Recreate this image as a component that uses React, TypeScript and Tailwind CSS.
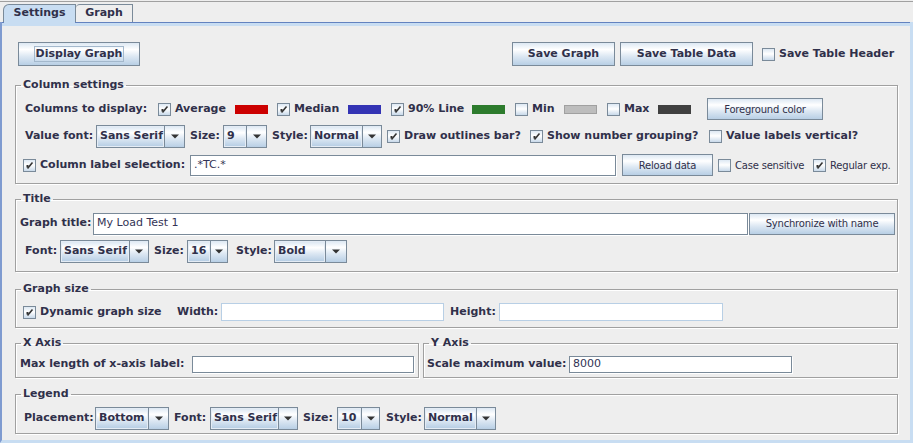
import type { ReactNode } from 'react';

const grad = 'bg-[linear-gradient(#dde8f3,#ffffff_30%,#dde8f3_60%,#b8cfe5)]';
const ink = 'text-[#30304a]';

function Label({ children, className = '' }: { children: ReactNode; className?: string }) {
    return (
        <span className={`flex shrink-0 items-center whitespace-nowrap text-[11px] font-bold ${ink} ${className}`}>
            {children}
        </span>
    );
}

function Btn({
    children,
    className = '',
    small = false,
    focus = false,
}: {
    children: ReactNode;
    className?: string;
    small?: boolean;
    focus?: boolean;
}) {
    return (
        <div
            className={`flex shrink-0 items-center justify-center border border-[#7a8a99] ${grad} ${ink} ${
                small ? 'text-[10px] tracking-[-0.2px]' : 'text-[11px] font-bold'
            } ${className}`}
        >
            {focus ? <span className="border border-[#a3b8cc] px-px leading-[14px]">{children}</span> : children}
        </div>
    );
}

function Check({ on = false }: { on?: boolean }) {
    return (
        <span className="flex h-[13px] w-[13px] shrink-0 items-center justify-center border border-[#7a8a99] bg-[linear-gradient(#dde8f3,#ffffff_45%,#c8d9ea)]">
            {on && (
                <svg width="9" height="9" viewBox="0 0 9 9">
                    <rect x="1.5" y="4" width="2" height="2.5" fill="#333" />
                    <path d="M2.5 7.5 L7.5 1.5" stroke="#333" strokeWidth="1.6" fill="none" />
                </svg>
            )}
        </span>
    );
}

function CheckLabel({
    children,
    on = false,
    small = false,
    className = '',
}: {
    children: ReactNode;
    on?: boolean;
    small?: boolean;
    className?: string;
}) {
    return (
        <span className={`flex shrink-0 items-center ${className}`}>
            <Check on={on} />
            <span
                className={`ml-[4px] whitespace-nowrap ${ink} ${
                    small ? 'text-[10px] tracking-[-0.2px]' : 'text-[11px] font-bold'
                }`}
            >
                {children}
            </span>
        </span>
    );
}

function Combo({ value, className, arrow }: { value: string; className: string; arrow: string }) {
    return (
        <div className={`flex h-[23px] shrink-0 border border-[#7a8a99] ${className}`}>
            <div
                className={`flex flex-1 items-center border border-[#e4ecf5] pl-[2px] text-[11px] font-bold whitespace-nowrap ${grad} ${ink}`}
            >
                {value}
            </div>
            <div className={`flex items-center justify-center border-l border-[#7a8a99] ${grad} ${arrow}`}>
                <svg width="8" height="5" viewBox="0 0 8 5">
                    <path d="M0 0.5 H8 L4 4.5 Z" fill="#333" />
                </svg>
            </div>
        </div>
    );
}

function Field({ value = '', className, disabled = false }: { value?: string; className: string; disabled?: boolean }) {
    return (
        <div
            className={`flex shrink-0 items-center bg-white pl-[3px] text-[11px] text-[#333355] whitespace-nowrap ${
                disabled ? 'border border-[#b8cfe5]' : 'border border-[#7a8a99] shadow-[1px_1px_0_#ffffff]'
            } ${className}`}
        >
            {value}
        </div>
    );
}

function Swatch({ box, color }: { box: string; color: string }) {
    return (
        <span className={`flex shrink-0 items-center ${box}`}>
            <span className={`h-[9px] w-[33px] ${color}`} />
        </span>
    );
}

function Group({ title, children, className = '' }: { title: string; children: ReactNode; className?: string }) {
    return (
        <fieldset
            className={`min-w-0 border border-[#a0a0a0] shadow-[inset_1px_1px_0_#ffffff,1px_1px_0_#ffffff] ${className}`}
        >
            <legend className={`ml-[5px] px-[2px] text-[11px] leading-[14px] font-bold ${ink}`}>{title}</legend>
            {children}
        </fieldset>
    );
}

export default function App() {
    return (
        <div className="h-[443px] w-[913px] overflow-hidden bg-[#eeeeee] pt-px font-['DejaVu_Sans',sans-serif]">
            <div className="flex h-[21px] items-end border-t border-[#a0a0a0] pl-[3px]">
                <div
                    className={`flex h-[18px] w-[73px] items-center justify-center rounded-tl-[6px] border-t border-r border-l border-[#7a8a99] bg-[#c8ddf2] text-[11px] font-bold ${ink}`}
                >
                    Settings
                </div>
                <div
                    className={`flex h-[18px] w-[57px] items-center justify-center rounded-tl-[4px] border-t border-r border-[#7a8a99] text-[11px] font-bold ${ink}`}
                >
                    Graph
                </div>
            </div>

            <div className="flex h-[421px] flex-col border-r-[3px] border-b-[3px] border-l-2 border-r-[#c8ddf2] border-b-[#c8ddf2] border-l-[#7f9bd0]">
                <div className="flex h-px shrink-0">
                    <div className="w-[2px] bg-[#6382bf]" />
                    <div className="w-[71px] bg-[#c8ddf2]" />
                    <div className="flex-1 bg-[#6382bf]" />
                </div>
                <div className="h-[3px] shrink-0 bg-[#c8ddf2]" />

                <div className="flex flex-col pt-[16px] pr-[12px] pl-[13px]">
                    <div className="flex h-[24px] items-stretch pl-[3px]">
                        <Btn className="w-[122px]" focus>
                            Display Graph
                        </Btn>
                        <div className="ml-auto flex items-stretch">
                            <Btn className="w-[103px]">Save Graph</Btn>
                            <Btn className="ml-[5px] w-[133px]">Save Table Data</Btn>
                            <CheckLabel className="w-[145px] pl-[9px]">Save Table Header</CheckLabel>
                        </div>
                    </div>

                    <Group title="Column settings" className="mt-[12px] pt-[6px] pb-[7px]">
                        <div className="flex h-[22px] items-center pl-[9px]">
                            <Label className="w-[133px]">Columns to display:</Label>
                            <CheckLabel on className="w-[77px]">
                                Average
                            </CheckLabel>
                            <Swatch box="w-[42px]" color="bg-[#cc0000]" />
                            <CheckLabel on className="w-[71px]">
                                Median
                            </CheckLabel>
                            <Swatch box="w-[43px]" color="bg-[#3333b4]" />
                            <CheckLabel on className="w-[81px]">
                                90% Line
                            </CheckLabel>
                            <Swatch box="w-[43px]" color="bg-[#2d7b2d]" />
                            <CheckLabel className="w-[49px]">Min</CheckLabel>
                            <Swatch box="w-[43px]" color="border border-[#a0a0a0] bg-[#bdbdbd]" />
                            <CheckLabel className="w-[51px]">Max</CheckLabel>
                            <Swatch box="w-[49px]" color="bg-[#404040]" />
                            <Btn small className="h-[22px] w-[116px]">
                                Foreground color
                            </Btn>
                        </div>

                        <div className="mt-[5px] flex h-[22px] items-center pl-[9px]">
                            <Label className="w-[71px]">Value font:</Label>
                            <Combo value="Sans Serif" className="w-[89px]" arrow="w-[20px]" />
                            <Label className="w-[38px] pl-[5px]">Size:</Label>
                            <Combo value="9" className="w-[44px]" arrow="w-[20px]" />
                            <Label className="w-[43px] pl-[5px]">Style:</Label>
                            <Combo value="Normal" className="w-[72px]" arrow="w-[19px]" />
                            <CheckLabel on className="w-[148px] pl-[5px]">
                                Draw outlines bar?
                            </CheckLabel>
                            <CheckLabel on className="w-[179px]">
                                Show number grouping?
                            </CheckLabel>
                            <CheckLabel>Value labels vertical?</CheckLabel>
                        </div>

                        <div className="mt-[7px] flex h-[22px] items-center pl-[7px]">
                            <CheckLabel on className="w-[167px]">
                                Column label selection:
                            </CheckLabel>
                            <Field value=".*TC.*" className="h-[21px] w-[426px]" />
                            <Btn small className="ml-[6px] h-[22px] w-[91px]">
                                Reload data
                            </Btn>
                            <CheckLabel small className="w-[100px] pl-[5px]">
                                Case sensitive
                            </CheckLabel>
                            <CheckLabel small on>
                                Regular exp.
                            </CheckLabel>
                        </div>
                    </Group>

                    <Group title="Title" className="mt-[8px] pt-[6px] pb-[8px]">
                        <div className="flex h-[23px] items-center pl-[4px]">
                            <Label className="w-[73px]">Graph title:</Label>
                            <Field value="My Load Test 1" className="h-[22px] w-[655px]" />
                            <Btn small className="ml-px h-[22px] w-[146px]">
                                Synchronize with name
                            </Btn>
                        </div>
                        <div className="mt-[5px] flex h-[23px] items-center pl-[9px]">
                            <Label className="w-[35px]">Font:</Label>
                            <Combo value="Sans Serif" className="w-[89px]" arrow="w-[19px]" />
                            <Label className="w-[38px] pl-[5px]">Size:</Label>
                            <Combo value="16" className="w-[41px]" arrow="w-[17px]" />
                            <Label className="w-[46px] pl-[8px]">Style:</Label>
                            <Combo value="Bold" className="w-[73px]" arrow="w-[21px]" />
                        </div>
                    </Group>

                    <Group title="Graph size" className="mt-[10px] pt-[6px] pb-[5px]">
                        <div className="flex h-[20px] items-center pl-[7px]">
                            <CheckLabel on className="w-[154px]">
                                Dynamic graph size
                            </CheckLabel>
                            <Label className="w-[44px]">Width:</Label>
                            <Field disabled className="h-[18px] w-[223px]" />
                            <Label className="w-[55px] pl-[6px]">Height:</Label>
                            <Field disabled className="h-[18px] w-[224px]" />
                        </div>
                    </Group>

                    <div className="mt-[8px] flex gap-[4px]">
                        <Group title="X Axis" className="w-[404px] shrink-0 pt-[5px] pb-[3px]">
                            <div className="flex h-[19px] items-center pl-[4px]">
                                <Label className="w-[172px]">Max length of x-axis label:</Label>
                                <Field className="h-[17px] w-[222px]" />
                            </div>
                        </Group>
                        <Group title="Y Axis" className="flex-1 pt-[5px] pb-[3px]">
                            <div className="flex h-[19px] items-center pl-[3px]">
                                <Label className="w-[142px]">Scale maximum value:</Label>
                                <Field value="8000" className="h-[17px] w-[223px]" />
                            </div>
                        </Group>
                    </div>

                    <Group title="Legend" className="mt-[9px] pt-[6px] pb-[3px]">
                        <div className="flex h-[23px] items-center pl-[8px]">
                            <Label className="w-[71px]">Placement:</Label>
                            <Combo value="Bottom" className="w-[74px]" arrow="w-[20px]" />
                            <Label className="w-[41px] pl-[5px]">Font:</Label>
                            <Combo value="Sans Serif" className="w-[88px]" arrow="w-[19px]" />
                            <Label className="w-[39px] pl-[5px]">Size:</Label>
                            <Combo value="10" className="w-[43px]" arrow="w-[18px]" />
                            <Label className="w-[44px] pl-[6px]">Style:</Label>
                            <Combo value="Normal" className="w-[72px]" arrow="w-[19px]" />
                        </div>
                    </Group>
                </div>
            </div>
        </div>
    );
}
